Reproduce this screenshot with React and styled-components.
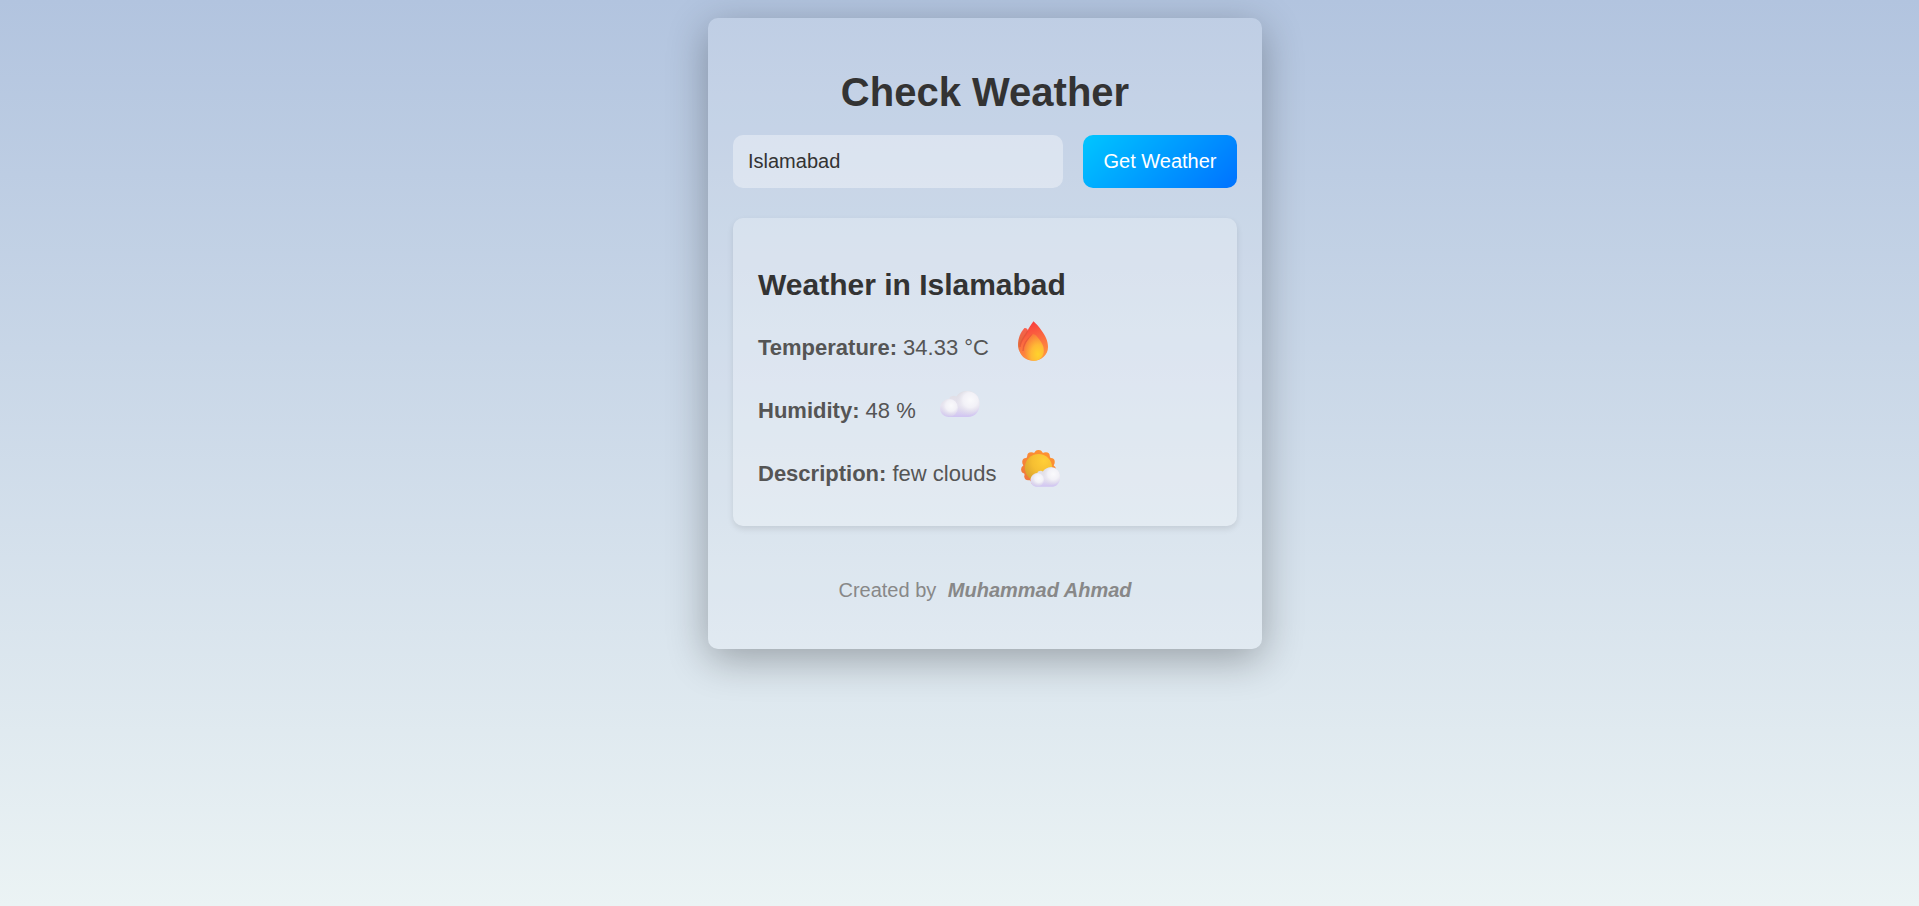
import React, { useState } from "react";
import styled, { createGlobalStyle } from "styled-components";

const GlobalStyle = createGlobalStyle`
  *, *::before, *::after { box-sizing: border-box; }
  body {
    margin: 0;
    min-height: 100vh;
    background: linear-gradient(to bottom, #b2c4df, #ebf3f4) no-repeat fixed;
    font-family: "Liberation Sans", Arial, sans-serif;
    color: #333;
  }
`;

const Page = styled.main`
  display: flex;
  justify-content: center;
  padding: 18px 0 18px 51px;
`;

const Card = styled.section`
  width: 100%;
  max-width: 554px;
  padding: 25px;
  border-radius: 10px;
  background: rgba(255, 255, 255, 0.17);
  box-shadow: 0 10px 40px rgba(0, 0, 0, 0.3);
`;

const Title = styled.h1`
  margin: 26px 0 20px;
  font-size: 40px;
  line-height: 46px;
  text-align: center;
`;

const SearchForm = styled.form`
  display: flex;
  gap: 20px;
  margin-bottom: 30px;
`;

const CityInput = styled.input`
  flex: 1;
  min-width: 0;
  height: 53px;
  padding: 0 15px;
  border: 0;
  border-radius: 10px;
  outline: none;
  background: rgba(255, 255, 255, 0.37);
  color: #333;
  font: inherit;
  font-size: 20px;
`;

const SearchButton = styled.button`
  min-width: 154px;
  height: 53px;
  padding: 0 20px;
  border: 0;
  border-radius: 10px;
  background: linear-gradient(135deg, #00c6ff, #0072ff);
  color: #fff;
  font: inherit;
  font-size: 20px;
  cursor: pointer;
`;

const Report = styled.article`
  padding: 25px 25px 39px;
  border-radius: 10px;
  background: rgba(255, 255, 255, 0.25);
  box-shadow: 0 3px 6px rgba(0, 0, 0, 0.1);
`;

const ReportTitle = styled.h2`
  margin: 25px 0 19px;
  font-size: 30px;
  line-height: 34px;
`;

const Reading = styled.p`
  margin: 0;
  color: #555;
  font-size: 22px;
  line-height: 25px;

  & + & { margin-top: 23px; }
`;

const Icon = styled.svg`
  width: 40px;
  height: 40px;
  margin-left: 24px;
  vertical-align: -6px;
`;

const Footer = styled.footer`
  margin: 53px 0 22px;
  color: #888;
  font-size: 20px;
  line-height: 23px;
  text-align: center;
`;

const Author = styled.strong`
  margin-left: 6px;
  font-style: italic;
`;

function FireIcon() {
  return (
    <Icon viewBox="0 0 40 40" aria-hidden="true">
      <defs>
        <linearGradient id="fireBack" x1="0.3" y1="0" x2="0.3" y2="1">
          <stop offset="0" stopColor="#f9604f" />
          <stop offset="0.5" stopColor="#e56a3c" />
          <stop offset="1" stopColor="#f28a45" />
        </linearGradient>
        <linearGradient id="fireBody" x1="0.4" y1="0" x2="0.65" y2="1">
          <stop offset="0" stopColor="#f83a3e" />
          <stop offset="0.4" stopColor="#fb6540" />
          <stop offset="1" stopColor="#ff9b3f" />
        </linearGradient>
        <radialGradient id="fireCore" cx="0.7" cy="0.76" r="0.8">
          <stop offset="0" stopColor="#ffd32c" />
          <stop offset="0.45" stopColor="#ffb935" />
          <stop offset="1" stopColor="#f9763c" />
        </radialGradient>
      </defs>
      <path fill="url(#fireBack)" d="M11.5 7C13.5 6.800 14.500 8 15 9.500L18 35L15 37.500C8.500 35 5 30 5 24C5 17 7.500 11.500 11.500 7Z" />
      <path fill="url(#fireBody)" d="M20.500 0.300C23 2.500 26 6 28.500 9.500C32.500 15 35 20 35 26C35 34 28.500 39.700 20.500 39.700C12 39.700 6 34 6.500 27C7 20 12 15 14.500 10C15.800 6.500 18 4 20.500 0.300Z" />
      <path fill="none" stroke="#d94f35" strokeOpacity="0.55" strokeWidth="1.400" d="M14.500 10C12.500 15 7.500 19 7 26M19 14C15 18 10 22 10 30" />
      <path fill="url(#fireCore)" d="M20 13C22 13 24 15.500 26 18C29 22 30.800 25 30.800 29.500C30.800 35.500 27 39.700 21 39.700C15 39.700 11.500 35.500 11.500 29.500C11.500 22.500 16 17 20 13Z" />
    </Icon>
  );
}

function CloudIcon() {
  return (
    <Icon viewBox="0 0 40 40" aria-hidden="true">
      <CloudShape id="humidity" />
    </Icon>
  );
}

function CloudShape({ id }) {
  return (
    <>
      <defs>
        <linearGradient id={`${id}Base`} x1="0" y1="0" x2="0" y2="1">
          <stop offset="0" stopColor="#dcdce0" />
          <stop offset="0.55" stopColor="#e9e5f2" />
          <stop offset="1" stopColor="#d0c4f1" />
        </linearGradient>
        <radialGradient id={`${id}Puff`} cx="0.62" cy="0.38" r="0.62">
          <stop offset="0" stopColor="#fafafc" />
          <stop offset="0.5" stopColor="#f2f1f7" />
          <stop offset="1" stopColor="#dddbe6" stopOpacity="0.2" />
        </radialGradient>
      </defs>
      <path
        fill={`url(#${id}Base)`}
        d="M9 33C4 33 0 29.200 0 24.300C0 19.500 4 15.500 9 15C10 12 13.500 11 16.500 12.500C18.500 9.200 22.500 7 27.500 7C34.500 7 39.500 12.500 39.500 20C39.500 28 35 33 28 33Z"
      />
      <circle cx="27.500" cy="19" r="12" fill={`url(#${id}Puff)`} />
      <circle cx="9" cy="23.800" r="9" fill={`url(#${id}Puff)`} />
    </>
  );
}

function PartlySunnyIcon() {
  const petals = Array.from({ length: 11 }, (_, i) => {
    const angle = (i * 2 * Math.PI) / 11;
    return [18.5 + 13.5 * Math.sin(angle), 20.5 - 13.5 * Math.cos(angle)];
  });
  return (
    <Icon viewBox="0 0 40 40" aria-hidden="true">
      <defs>
        <linearGradient id="sunRays" gradientUnits="userSpaceOnUse" x1="28" y1="4" x2="8" y2="36">
          <stop offset="0" stopColor="#ff9430" />
          <stop offset="1" stopColor="#f0763c" />
        </linearGradient>
        <radialGradient id="sunDisc" cx="0.7" cy="0.25" r="0.85">
          <stop offset="0" stopColor="#ffce37" />
          <stop offset="0.5" stopColor="#f6bf32" />
          <stop offset="1" stopColor="#d7a02d" />
        </radialGradient>
      </defs>
      <g fill="url(#sunRays)">
        <circle cx="18.500" cy="20.500" r="15.500" />
        {petals.map(([x, y], i) => (
          <circle key={i} cx={x} cy={y} r="4" />
        ))}
      </g>
      <circle cx="18.500" cy="20.800" r="13.700" fill="url(#sunDisc)" />
      <g transform="translate(10.500 15) scale(0.75)">
        <CloudShape id="sky" />
      </g>
    </Icon>
  );
}

const readings = [
  { label: "Temperature", value: "34.33 °C", icon: FireIcon },
  { label: "Humidity", value: "48 %", icon: CloudIcon },
  { label: "Description", value: "few clouds", icon: PartlySunnyIcon },
];

export default function App() {
  const [city, setCity] = useState("Islamabad");
  return (
    <>
      <GlobalStyle />
      <Page>
        <Card>
          <Title>Check Weather</Title>
          <SearchForm onSubmit={(event) => event.preventDefault()}>
            <CityInput
              type="text"
              aria-label="City"
              value={city}
              onChange={(event) => setCity(event.target.value)}
            />
            <SearchButton type="submit">Get Weather</SearchButton>
          </SearchForm>
          <Report>
            <ReportTitle>Weather in Islamabad</ReportTitle>
            {readings.map(({ label, value, icon: ReadingIcon }) => (
              <Reading key={label}>
                <strong>{label}:</strong> {value}
                <ReadingIcon />
              </Reading>
            ))}
          </Report>
          <Footer>
            Created by <Author>Muhammad Ahmad</Author>
          </Footer>
        </Card>
      </Page>
    </>
  );
}
